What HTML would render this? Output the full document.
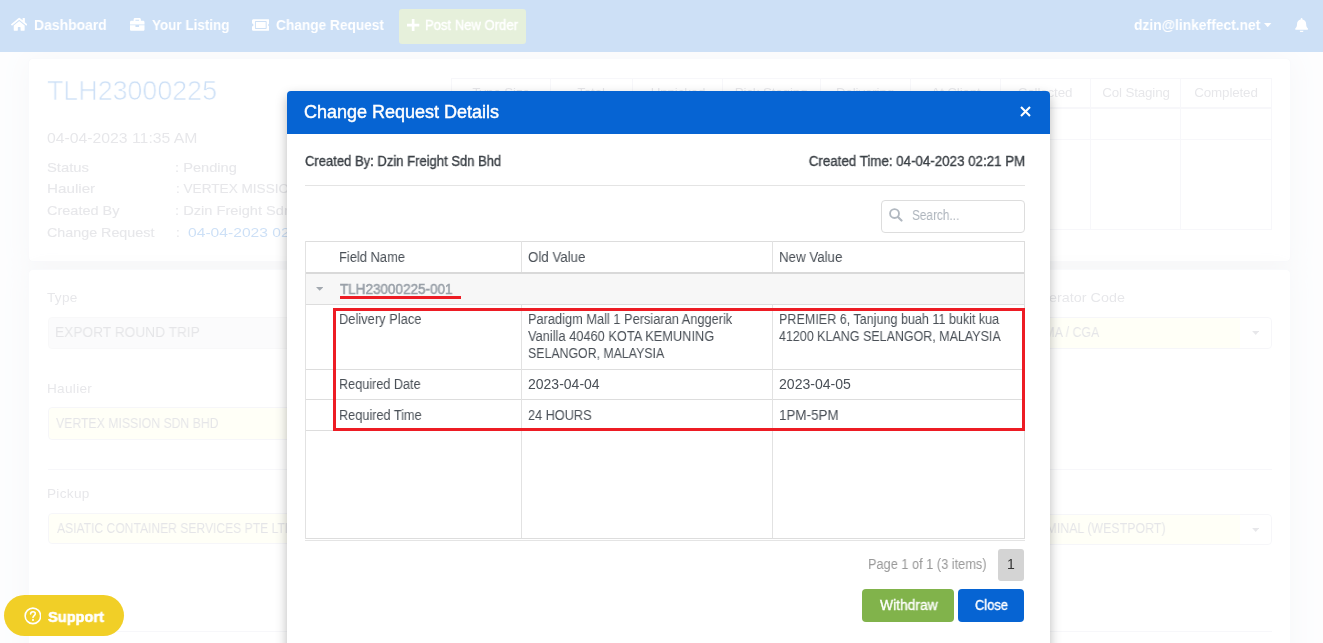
<!DOCTYPE html>
<html lang="en"><head><meta charset="utf-8"><title>Change Request Details</title>
<style>
html,body{margin:0;padding:0}
body{width:1323px;height:643px;overflow:hidden;position:relative;background:#f3f5fa;font-family:"Liberation Sans",sans-serif;}
.t{position:absolute;white-space:nowrap;display:block;will-change:transform}
.abs{position:absolute}
#page,#shade{position:absolute;left:0;top:0;width:1323px;height:643px;overflow:hidden}
#page{isolation:isolate}
#shade{background:rgba(255,255,255,.8)}
.nav{position:absolute;left:0;top:0;width:1323px;height:52px;background:#0664d3;z-index:2}
#page svg,#page .t,#page .btn{z-index:3}
.card{position:absolute;box-sizing:border-box;border:1px solid #e0e3ee;background:#fff;border-radius:5px;box-shadow:0 2.4px 28px 0 rgba(58,59,69,.17)}
.inp{position:absolute;height:32px;box-sizing:border-box;border:1px solid #d1d3e2;border-radius:4px}
.hr{position:absolute;height:1px;background:#d4d7e5}
.vl{position:absolute;width:1px;background:#d4d7e5}
#modal{position:absolute;left:287px;top:91px;width:763px;height:600px;background:#fff;border-radius:4px;box-shadow:0 5px 12px rgba(0,0,0,.28)}
#mh{position:absolute;left:0;top:0;width:763px;height:43px;background:#0664d3;border-radius:4px 4px 0 0}
.gl{position:absolute;background:#ddd}
</style></head>
<body>
<main id="page">
<nav class="nav" aria-label="Main navigation"></nav>
<svg class="abs" style="left:11.1px;top:16.9px" width="16.4" height="14.6" viewBox="0 0 576 512"><path fill="#fff" d="M280 148 96 300v164a16 16 0 0 0 16 16l112-.3a16 16 0 0 0 16-16V368a16 16 0 0 1 16-16h64a16 16 0 0 1 16 16v95.6a16 16 0 0 0 16 16l112 .3a16 16 0 0 0 16-16V300L296 148a12 12 0 0 0-16 0zM572 251l-84-69V44a12 12 0 0 0-12-12h-56a12 12 0 0 0-12 12v72l-89-74a48 48 0 0 0-61 0L4 251a12 12 0 0 0-2 17l26 31a12 12 0 0 0 17 2L280 107a12 12 0 0 1 16 0l236 194a12 12 0 0 0 17-2l26-31a12 12 0 0 0-2-17z"/></svg>
<svg class="abs" style="left:130px;top:18.2px" width="14.5" height="12.8" viewBox="0 0 512 448"><path fill="#fff" d="M320 304c0 9-7 16-16 16h-96c-9 0-16-7-16-16v-48H0v144c0 26 22 48 48 48h416c26 0 48-22 48-48V256H320v48zM464 96h-80V48c0-26-22-48-48-48H176c-26 0-48 22-48 48v48H48c-26 0-48 22-48 48v80h512v-80c0-26-22-48-48-48zm-144 0H192V64h128v32z"/></svg>
<svg class="abs" style="left:251.8px;top:18.5px" width="17.6" height="12" viewBox="0 0 576 384"><path fill="#fff" d="M128 96h320v192H128V96zm400 96c0 26.5 21.5 48 48 48v96c0 26.5-21.5 48-48 48H48c-26.5 0-48-21.5-48-48v-96c26.5 0 48-21.5 48-48s-21.5-48-48-48V48C0 21.5 21.5 0 48 0h480c26.5 0 48 21.5 48 48v96c-26.5 0-48 21.5-48 48zm-48-104c0-13-11-24-24-24H120c-13 0-24 11-24 24v208c0 13 11 24 24 24h336c13 0 24-11 24-24V88z" fill-rule="evenodd"/></svg>
<div class="abs btn" style="left:399px;top:9px;width:127px;height:35px;background:#81b34b;border-radius:3px"></div>
<svg class="abs" style="left:407.3px;top:19px" width="12.3" height="12.3" viewBox="0 0 12 12"><path fill="#fff" d="M4.7 0h2.6v4.7H12v2.6H7.3V12H4.7V7.3H0V4.7h4.7z"/></svg>
<svg class="abs" style="left:1264.4px;top:22.7px" width="7.4" height="4.2" viewBox="0 0 8 4.5"><path fill="#fff" d="M0 0h8L4 4.5z"/></svg>
<svg class="abs" style="left:1294.9px;top:17.6px" width="13.2" height="14.6" viewBox="0 0 448 512"><path fill="#fff" d="M224 512c35 0 64-29 64-64H160c0 35 29 64 64 64zm215-150c-19-21-55-52-55-154 0-78-54-140-128-155V32a32 32 0 1 0-64 0v21C118 68 64 130 64 208c0 102-36 133-55 154-6 6-9 14-9 22 0 16 13 32 32 32h384c19 0 32-16 32-32 0-8-3-16-9-22z"/></svg>
<div class="card" style="left:28px;top:58px;width:1263px;height:204px"></div>
<div class="card" style="left:28px;top:269px;width:1263px;height:400px"></div>
<div class="hr" style="left:451px;top:77.5px;width:821px"></div>
<div class="hr" style="left:451px;top:139px;width:821px"></div>
<div class="hr" style="left:451px;top:229px;width:821px"></div>
<div class="hr" style="left:451px;top:106.5px;width:821px;height:2px"></div>
<div class="vl" style="left:451px;top:77.5px;height:152px"></div>
<div class="vl" style="left:550px;top:77.5px;height:152px"></div>
<div class="vl" style="left:632px;top:77.5px;height:152px"></div>
<div class="vl" style="left:722px;top:77.5px;height:152px"></div>
<div class="vl" style="left:820px;top:77.5px;height:152px"></div>
<div class="vl" style="left:910px;top:77.5px;height:152px"></div>
<div class="vl" style="left:1000px;top:77.5px;height:152px"></div>
<div class="vl" style="left:1090px;top:77.5px;height:152px"></div>
<div class="vl" style="left:1180px;top:77.5px;height:152px"></div>
<div class="vl" style="left:1271px;top:77.5px;height:152px"></div>
<div class="inp" style="left:47.5px;top:317.3px;width:380px;background:#ececee;border-color:#dcdce0"></div>
<div class="inp" style="left:47.5px;top:407px;width:380px;height:33px;background:#ffffd8"></div>
<div class="inp" style="left:47.5px;top:513.3px;width:380px;height:31px;background:#ffffd8"></div>
<div class="inp" style="left:900px;top:317.3px;width:371.5px;background:linear-gradient(90deg,#ffffd8 0,#ffffd8 339px,#fff 339px)"></div>
<div class="inp" style="left:900px;top:513.6px;width:371.5px;height:31px;background:linear-gradient(90deg,#ffffd8 0,#ffffd8 339px,#fff 339px)"></div>
<svg class="abs" style="left:1252px;top:331.3px" width="7.4" height="4" viewBox="0 0 8 4.5"><path fill="#858796" d="M0 0h8L4 4.5z"/></svg>
<svg class="abs" style="left:1252px;top:527.5px" width="7.4" height="4" viewBox="0 0 8 4.5"><path fill="#858796" d="M0 0h8L4 4.5z"/></svg>
<div class="hr" style="left:47.5px;top:469px;width:1224.5px"></div>
<div class="hr" style="left:47.5px;top:630.8px;width:1224.5px"></div>
<span class="t" id="n1" style="top:17.00px;font-size:14.4px;line-height:17px;color:#fff;font-weight:700;left:34.23px;transform:scaleX(0.9679);transform-origin:left center;">Dashboard</span>
<span class="t" id="n2" style="top:17.00px;font-size:14.4px;line-height:17px;color:#fff;font-weight:700;left:151.53px;transform:scaleX(0.9350);transform-origin:left center;">Your Listing</span>
<span class="t" id="n3" style="top:17.00px;font-size:14.4px;line-height:17px;color:#fff;font-weight:700;left:275.82px;transform:scaleX(0.9504);transform-origin:left center;">Change Request</span>
<span class="t" id="n4" style="top:17.00px;font-size:14px;line-height:17px;color:#fff;left:424.77px;transform:scaleX(0.9330);transform-origin:left center;-webkit-text-stroke:0.4px #fff;">Post New Order</span>
<span class="t" id="n5" style="top:17.00px;font-size:14.4px;line-height:17px;color:#fff;font-weight:700;left:1133.82px;transform:scaleX(0.9595);transform-origin:left center;">dzin@linkeffect.net</span>
<span class="t" id="c1t" style="top:74.00px;font-size:28px;line-height:34px;color:#0664d3;left:46.84px;transform:scaleX(0.9577);transform-origin:left center;-webkit-text-stroke:.7px #fff;">TLH23000225</span>
<span class="t" id="c1d" style="top:130.00px;font-size:14.4px;line-height:17px;color:#858796;left:47.05px;transform:scaleX(1.0954);transform-origin:left center;">04-04-2023 11:35 AM</span>
<span class="t" id="r0a" style="top:160.00px;font-size:13.6px;line-height:16px;color:#858796;left:47.36px;transform:scaleX(1.0887);transform-origin:left center;-webkit-text-stroke:0.15px #858796;">Status</span>
<span class="t" id="r0b" style="top:160.00px;font-size:13.6px;line-height:16px;color:#858796;left:175.46px;transform:scaleX(1.0757);transform-origin:left center;-webkit-text-stroke:0.15px #858796;">: Pending</span>
<span class="t" id="r1a" style="top:181.00px;font-size:13.6px;line-height:16px;color:#858796;left:46.78px;transform:scaleX(1.1190);transform-origin:left center;-webkit-text-stroke:0.15px #858796;">Haulier</span>
<span class="t" id="r1b" style="top:181.00px;font-size:13.6px;line-height:16px;color:#858796;left:175.55px;-webkit-text-stroke:0.15px #858796;">: VERTEX MISSION SDN BHD</span>
<span class="t" id="r2a" style="top:203.00px;font-size:13.6px;line-height:16px;color:#858796;left:47.37px;transform:scaleX(1.0652);transform-origin:left center;-webkit-text-stroke:0.15px #858796;">Created By</span>
<span class="t" id="r2b" style="top:203.00px;font-size:13.6px;line-height:16px;color:#858796;left:175.45px;transform:scaleX(1.0761);transform-origin:left center;-webkit-text-stroke:0.15px #858796;">: Dzin Freight Sdn Bhd</span>
<span class="t" id="r3a" style="top:225.00px;font-size:13.6px;line-height:16px;color:#858796;left:47.37px;transform:scaleX(1.0522);transform-origin:left center;-webkit-text-stroke:0.15px #858796;">Change Request</span>
<span class="t" id="r3c" style="top:225.00px;font-size:13.6px;line-height:16px;color:#858796;left:175.55px;-webkit-text-stroke:0.15px #858796;">:</span>
<span class="t" id="r3b" style="top:225.00px;font-size:13.6px;line-height:16px;color:#0664d3;left:187.73px;transform:scaleX(1.1500);transform-origin:left center;">04-04-2023 02:21 PM</span>
<span class="t" id="h0" style="top:85.00px;font-size:13.4px;line-height:16px;color:#858796;left:500.90px;transform:translateX(-50%);letter-spacing:-.15px;">Type Size</span>
<span class="t" id="h1" style="top:85.00px;font-size:13.4px;line-height:16px;color:#858796;left:591.45px;transform:translateX(-50%);letter-spacing:-.15px;">Total</span>
<span class="t" id="h2" style="top:85.00px;font-size:13.4px;line-height:16px;color:#858796;left:677.60px;transform:translateX(-50%);letter-spacing:-.15px;">Unpicked</span>
<span class="t" id="h3" style="top:85.00px;font-size:13.4px;line-height:16px;color:#858796;left:771.45px;transform:translateX(-50%);letter-spacing:-.15px;">Pick Staging</span>
<span class="t" id="h4" style="top:85.00px;font-size:13.4px;line-height:16px;color:#858796;left:865.40px;transform:translateX(-50%);letter-spacing:-.15px;">Delivering</span>
<span class="t" id="h5" style="top:85.00px;font-size:13.4px;line-height:16px;color:#858796;left:955.60px;transform:translateX(-50%);letter-spacing:-.15px;">At Client</span>
<span class="t" id="h6" style="top:85.00px;font-size:13.4px;line-height:16px;color:#858796;left:1045.35px;transform:translateX(-50%);letter-spacing:-.15px;">Collected</span>
<span class="t" id="h7" style="top:85.00px;font-size:13.4px;line-height:16px;color:#858796;left:1135.50px;transform:translateX(-50%);letter-spacing:-.15px;">Col Staging</span>
<span class="t" id="h8" style="top:85.00px;font-size:13.4px;line-height:16px;color:#858796;left:1226.35px;transform:translateX(-50%);letter-spacing:-.15px;">Completed</span>
<span class="t" id="l1" style="top:290.00px;font-size:13.6px;line-height:16px;color:#858796;left:47.25px;letter-spacing:.3px;">Type</span>
<span class="t" id="i1" style="top:324.00px;font-size:14px;line-height:17px;color:#7c7e8c;left:55.48px;transform:scaleX(0.9798);transform-origin:left center;">EXPORT ROUND TRIP</span>
<span class="t" id="l2" style="top:381.00px;font-size:13.6px;line-height:16px;color:#858796;left:46.50px;letter-spacing:.3px;">Haulier</span>
<span class="t" id="i2" style="top:415.00px;font-size:14px;line-height:17px;color:#7c7e8c;left:56.48px;transform:scaleX(0.8758);transform-origin:left center;">VERTEX MISSION SDN BHD</span>
<span class="t" id="l3" style="top:486.00px;font-size:13.6px;line-height:16px;color:#858796;left:46.50px;letter-spacing:.3px;">Pickup</span>
<span class="t" id="i3" style="top:520.00px;font-size:14px;line-height:17px;color:#7c7e8c;left:56.70px;transform:scaleX(0.8645);transform-origin:left center;">ASIATIC CONTAINER SERVICES PTE LTD</span>
<span class="t" id="l4" style="top:290.00px;font-size:13.6px;line-height:16px;color:#858796;right:198.29px;transform:scaleX(1.0565);transform-origin:right center;">Operator Code</span>
<span class="t" id="i4" style="top:324.00px;font-size:14px;line-height:17px;color:#7c7e8c;right:223.20px;transform:scaleX(0.8811);transform-origin:right center;">CMA / CGA</span>
<span class="t" id="i5" style="top:520.00px;font-size:14px;line-height:17px;color:#7c7e8c;right:157.88px;transform:scaleX(0.8854);transform-origin:right center;">TERMINAL (WESTPORT)</span>
</main>
<div id="shade"></div>
<section id="modal" role="dialog" aria-modal="true" aria-labelledby="m_title">
<header id="mh"></header>
<svg class="abs" style="left:733px;top:15.3px" width="11" height="11" viewBox="0 0 11 11"><path d="M1 1l9 9M10 1l-9 9" stroke="#fff" stroke-width="2.1" fill="none"/></svg>
<div class="gl" style="left:18px;top:94px;width:719.5px;height:1px;background:#e4e4e4"></div>
<div class="abs" style="left:594px;top:109px;width:143.5px;height:32.5px;box-sizing:border-box;border:1px solid #ddd;border-radius:4px"></div>
<svg class="abs" style="left:602.4px;top:117.3px" width="13.6" height="13.6" viewBox="0 0 14 14"><circle cx="5.7" cy="5.7" r="4.6" stroke="#b1b8c0" stroke-width="1.9" fill="none"/><path d="M9.2 9.2l3.7 3.7" stroke="#b1b8c0" stroke-width="2.2" stroke-linecap="round"/></svg>
<div class="gl" style="left:18px;top:182px;width:719px;height:31.5px;background:#f7f7f7"></div>
<div class="gl" style="left:18px;top:150px;width:720px;height:1px;background:#ddd"></div>
<div class="gl" style="left:18px;top:180.5px;width:720px;height:2px;background:#d9d9d9"></div>
<div class="gl" style="left:18px;top:213px;width:720px;height:1px;background:#ddd"></div>
<div class="gl" style="left:18px;top:278px;width:720px;height:1px;background:#ddd"></div>
<div class="gl" style="left:18px;top:308px;width:720px;height:1px;background:#ddd"></div>
<div class="gl" style="left:18px;top:339px;width:720px;height:1px;background:#ddd"></div>
<div class="gl" style="left:18px;top:447px;width:720px;height:1px;background:#ddd"></div>
<div class="gl" style="left:18px;top:449px;width:720px;height:1px;background:#e4e4e4"></div>
<div class="gl" style="left:18px;top:150px;width:1px;height:298px;background:#e2e2e2"></div>
<div class="gl" style="left:737px;top:150px;width:1px;height:298px;background:#ddd"></div>
<div class="gl" style="left:234px;top:150px;width:1px;height:31px;background:#e2e2e2"></div>
<div class="gl" style="left:485px;top:150px;width:1px;height:31px;background:#e2e2e2"></div>
<div class="gl" style="left:234px;top:214px;width:1px;height:233px;background:#e2e2e2"></div>
<div class="gl" style="left:485px;top:214px;width:1px;height:233px;background:#e2e2e2"></div>
<svg class="abs" style="left:29px;top:196.3px" width="7.4" height="3.8" viewBox="0 0 8 4"><path fill="#a3a9b0" d="M0 0h8L4 4z"/></svg>
<div class="abs" style="left:710.6px;top:458px;width:26.3px;height:32px;background:#d4d4d4;border-radius:3px"></div>
<div class="abs" style="left:575.2px;top:498px;width:92.2px;height:33px;background:#81b34b;border-radius:4px"></div>
<div class="abs" style="left:671.2px;top:498px;width:66.2px;height:33px;background:#0664d3;border-radius:4px"></div>
<span class="t" id="m_title" style="top:10.00px;font-size:18px;line-height:22px;color:#fff;left:17.25px;-webkit-text-stroke:0.45px #fff;">Change Request Details</span>
<span class="t" id="m_cb" style="top:62.00px;font-size:14px;line-height:17px;color:#3b4046;left:17.53px;transform:scaleX(0.9306);transform-origin:left center;-webkit-text-stroke:0.35px #3b4046;">Created By: Dzin Freight Sdn Bhd</span>
<span class="t" id="m_ct" style="top:62.00px;font-size:14px;line-height:17px;color:#3b4046;right:24.75px;transform:scaleX(0.9524);transform-origin:right center;-webkit-text-stroke:0.35px #3b4046;">Created Time: 04-04-2023 02:21 PM</span>
<span class="t" id="m_s" style="top:116.00px;font-size:14px;line-height:17px;color:#adb4bc;left:624.77px;transform:scaleX(0.8444);transform-origin:left center;">Search...</span>
<span class="t" id="th1" style="top:158.00px;font-size:14px;line-height:17px;color:#4a5057;left:52.05px;transform:scaleX(0.9219);transform-origin:left center;">Field Name</span>
<span class="t" id="th2" style="top:158.00px;font-size:14px;line-height:17px;color:#4a5057;left:240.59px;transform:scaleX(0.9492);transform-origin:left center;">Old Value</span>
<span class="t" id="th3" style="top:158.00px;font-size:14px;line-height:17px;color:#4a5057;left:491.51px;transform:scaleX(0.9498);transform-origin:left center;">New Value</span>
<span class="t" id="g1" style="top:190.00px;font-size:14px;line-height:17px;color:#99a0a8;left:52.50px;transform:scaleX(0.9634);transform-origin:left center;-webkit-text-stroke:0.5px #99a0a8;">TLH23000225-001</span>
<span class="t" id="a1" style="top:220.00px;font-size:14px;line-height:17px;color:#4a5057;left:52.05px;transform:scaleX(0.9211);transform-origin:left center;">Delivery Place</span>
<span class="t" id="a2" style="top:285.00px;font-size:14px;line-height:17px;color:#4a5057;left:52.07px;transform:scaleX(0.9040);transform-origin:left center;">Required Date</span>
<span class="t" id="a3" style="top:316.00px;font-size:14px;line-height:17px;color:#4a5057;left:52.07px;transform:scaleX(0.9076);transform-origin:left center;">Required Time</span>
<span class="t" id="b1" style="top:220.00px;font-size:14px;line-height:17px;color:#4a5057;left:240.76px;transform:scaleX(0.9144);transform-origin:left center;">Paradigm Mall 1 Persiaran Anggerik</span>
<span class="t" id="b2" style="top:237.00px;font-size:14px;line-height:17px;color:#4a5057;left:241.07px;transform:scaleX(0.9158);transform-origin:left center;">Vanilla 40460 KOTA KEMUNING</span>
<span class="t" id="b3" style="top:254.00px;font-size:14px;line-height:17px;color:#4a5057;left:240.64px;transform:scaleX(0.8813);transform-origin:left center;">SELANGOR, MALAYSIA</span>
<span class="t" id="b4" style="top:285.00px;font-size:14px;line-height:17px;color:#4a5057;left:240.55px;">2023-04-04</span>
<span class="t" id="b5" style="top:316.00px;font-size:14px;line-height:17px;color:#4a5057;left:240.62px;transform:scaleX(0.9076);transform-origin:left center;">24 HOURS</span>
<span class="t" id="c1" style="top:220.00px;font-size:14px;line-height:17px;color:#4a5057;left:491.58px;transform:scaleX(0.8970);transform-origin:left center;">PREMIER 6, Tanjung buah 11 bukit kua</span>
<span class="t" id="c2" style="top:237.00px;font-size:14px;line-height:17px;color:#4a5057;left:492.48px;transform:scaleX(0.8913);transform-origin:left center;">41200 KLANG SELANGOR, MALAYSIA</span>
<span class="t" id="c3" style="top:285.00px;font-size:14px;line-height:17px;color:#4a5057;left:491.95px;transform:scaleX(1.0036);transform-origin:left center;">2023-04-05</span>
<span class="t" id="c4" style="top:316.00px;font-size:14px;line-height:17px;color:#4a5057;left:491.74px;transform:scaleX(0.9583);transform-origin:left center;">1PM-5PM</span>
<span class="t" id="pg" style="top:465.00px;font-size:14px;line-height:17px;color:#999;left:580.86px;transform:scaleX(0.9119);transform-origin:left center;">Page 1 of 1 (3 items)</span>
<span class="t" id="p1" style="top:465.00px;font-size:14px;line-height:17px;color:#333;left:720.00px;">1</span>
<span class="t" id="bw" style="top:506.00px;font-size:14px;line-height:17px;color:#fff;left:593.20px;transform:scaleX(0.9880);transform-origin:left center;-webkit-text-stroke:0.35px #fff;">Withdraw</span>
<span class="t" id="bc" style="top:506.00px;font-size:14px;line-height:17px;color:#fff;left:687.94px;transform:scaleX(0.9209);transform-origin:left center;-webkit-text-stroke:0.35px #fff;">Close</span>
</section>
<div class="abs" style="left:4px;top:595px;width:120px;height:41px;border-radius:21px;background:#f1cf27"></div>
<svg class="abs" style="left:23.6px;top:607px" width="17.8" height="17.8" viewBox="0 0 17 17"><circle cx="8.5" cy="8.5" r="7.4" stroke="#fff" stroke-width="1.5" fill="none"/><path d="M6.3 6.7c0-1.3 1-2.2 2.3-2.2 1.3 0 2.2.8 2.2 2 0 1.7-2.2 1.7-2.2 3.5" stroke="#fff" stroke-width="1.5" fill="none" stroke-linecap="round"/><circle cx="8.6" cy="12.4" r="1" fill="#fff"/></svg>
<span class="t" id="sup" style="top:608.00px;font-size:15px;line-height:18px;color:#fff;font-weight:700;left:48.30px;transform:scaleX(0.9722);transform-origin:left center;-webkit-text-stroke:0.6px #fff;">Support</span>
<div class="abs" style="left:333.2px;top:307.9px;width:692.1px;height:122.8px;box-sizing:border-box;border:3px solid #ed1c24"></div>
<div class="abs" style="left:340.2px;top:296.1px;width:120.7px;height:2.7px;background:#ed1c24"></div>
</body></html>
